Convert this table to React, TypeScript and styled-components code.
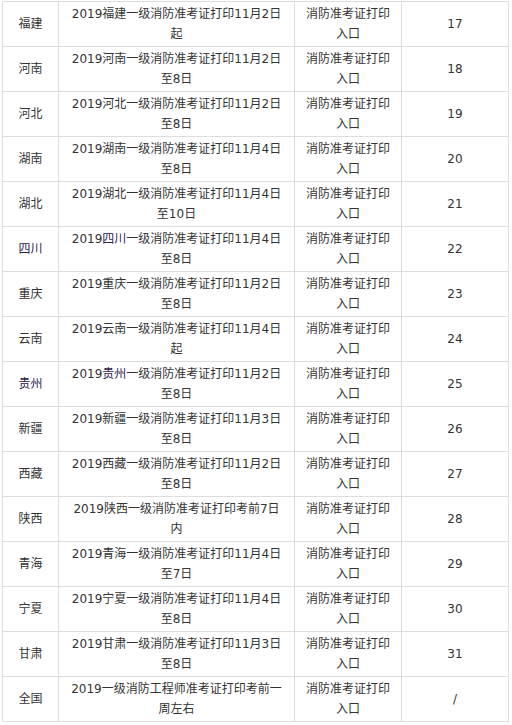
import React from "react";
import styled, { createGlobalStyle } from "styled-components";

type Row = {
  province: string;
  before: string;
  link?: boolean;
  after: string;
  entry: string;
  no: string;
};

const rows: Row[] = [
  { province: "福建", before: "2019", after: "一级消防准考证打印11月2日起", entry: "消防准考证打印入口", no: "17" },
  { province: "河南", before: "2019", after: "一级消防准考证打印11月2日至8日", entry: "消防准考证打印入口", no: "18" },
  { province: "河北", before: "2019", after: "一级消防准考证打印11月2日至8日", entry: "消防准考证打印入口", no: "19" },
  { province: "湖南", before: "2019", after: "一级消防准考证打印11月4日至8日", entry: "消防准考证打印入口", no: "20" },
  { province: "湖北", before: "2019", after: "一级消防准考证打印11月4日至10日", entry: "消防准考证打印入口", no: "21" },
  { province: "四川", link: true, before: "2019", after: "一级消防准考证打印11月4日至8日", entry: "消防准考证打印入口", no: "22" },
  { province: "重庆", before: "2019", after: "一级消防准考证打印11月2日至8日", entry: "消防准考证打印入口", no: "23" },
  { province: "云南", before: "2019", after: "一级消防准考证打印11月4日起", entry: "消防准考证打印入口", no: "24" },
  { province: "贵州", link: true, before: "2019", after: "一级消防准考证打印11月2日至8日", entry: "消防准考证打印入口", no: "25" },
  { province: "新疆", before: "2019", after: "一级消防准考证打印11月3日至8日", entry: "消防准考证打印入口", no: "26" },
  { province: "西藏", before: "2019", after: "一级消防准考证打印11月2日至8日", entry: "消防准考证打印入口", no: "27" },
  { province: "陕西", before: "2019", after: "一级消防准考证打印考前7日内", entry: "消防准考证打印入口", no: "28" },
  { province: "青海", before: "2019", after: "一级消防准考证打印11月4日至7日", entry: "消防准考证打印入口", no: "29" },
  { province: "宁夏", before: "2019", after: "一级消防准考证打印11月4日至8日", entry: "消防准考证打印入口", no: "30" },
  { province: "甘肃", before: "2019", after: "一级消防准考证打印11月3日至8日", entry: "消防准考证打印入口", no: "31" },
];

const GlobalStyle = createGlobalStyle`
  html, body {
    margin: 0;
    padding: 0;
    background: #fff;
  }
  body {
    font-family: "DejaVu Sans", "Noto Sans CJK SC", sans-serif;
    font-size: 12px;
    color: #333;
    overflow: hidden;
  }
`;

const Wrap = styled.div`
  padding-left: 2px;
  margin-top: 1px;
`;

const Table = styled.table`
  border-collapse: collapse;
  table-layout: fixed;
  width: 507px;
`;

const Cell = styled.td<{ $w: number; $pad?: number }>`
  width: ${(p) => p.$w}px;
  height: 45px;
  padding: 0 ${(p) => p.$pad ?? 4}px;
  border: 1px solid #ddd;
  text-align: center;
  vertical-align: middle;
  line-height: 20px;
  word-break: break-all;
  box-sizing: border-box;
`;

const Link = styled.span`
  color: #2e2050;
`;

export default function App() {
  return (
    <>
      <GlobalStyle />
      <Wrap>
        <Table>
          <tbody>
            {rows.map((r) => (
              <tr key={r.no}>
                <Cell $w={56}>{r.link ? <Link>{r.province}</Link> : r.province}</Cell>
                <Cell $w={236} $pad={10}>
                  {r.before}
                  {r.link ? <Link>{r.province}</Link> : r.province}
                  {r.after}
                </Cell>
                <Cell $w={107} $pad={9}>{r.entry}</Cell>
                <Cell $w={107}>{r.no}</Cell>
              </tr>
            ))}
            <tr>
              <Cell $w={56}>全国</Cell>
              <Cell $w={236} $pad={10}>2019一级消防工程师准考证打印考前一周左右</Cell>
              <Cell $w={107} $pad={9}>消防准考证打印入口</Cell>
              <Cell $w={107}>/</Cell>
            </tr>
          </tbody>
        </Table>
      </Wrap>
    </>
  );
}
